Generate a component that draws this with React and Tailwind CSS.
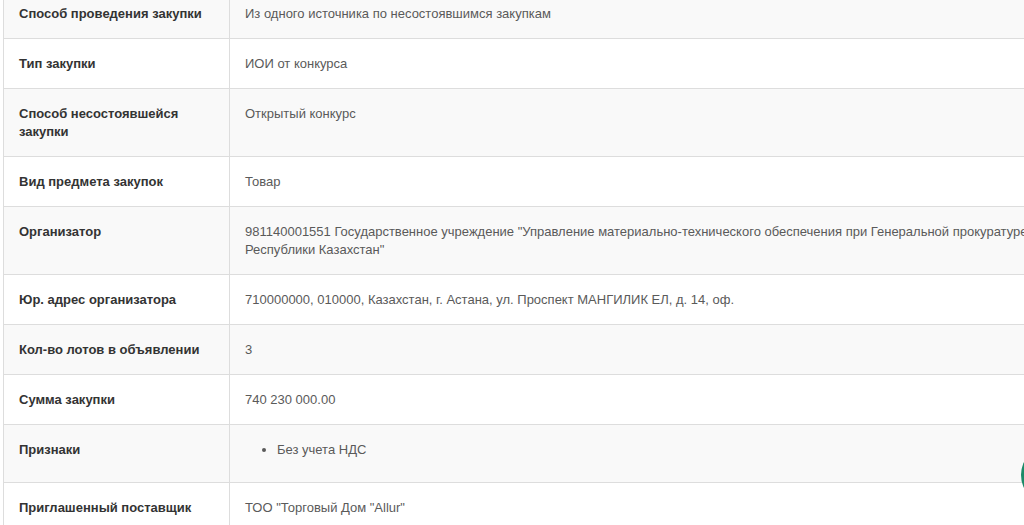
import React from "react";

const rows = [
  ["Способ проведения закупки", "Из одного источника по несостоявшимся закупкам"],
  ["Тип закупки", "ИОИ от конкурса"],
  ["Способ несостоявшейся закупки", "Открытый конкурс"],
  ["Вид предмета закупок", "Товар"],
  ["Организатор", "981140001551 Государственное учреждение \"Управление материально-технического обеспечения при Генеральной прокуратуре Республики Казахстан\""],
  ["Юр. адрес организатора", "710000000, 010000, Казахстан, г. Астана, ул. Проспект МАНГИЛИК ЕЛ, д. 14, оф."],
  ["Кол-во лотов в объявлении", "3"],
  ["Сумма закупки", "740 230 000.00"],
  ["Признаки", "__list__"],
  ["Приглашенный поставщик", "ТОО \"Торговый Дом \"Allur\""],
];

export default function App() {
  return (
    <div
      className="relative w-[1024px] h-[525px] overflow-hidden bg-white"
      style={{ fontFamily: '"Liberation Sans", Arial, sans-serif' }}
    >
      <div className="ml-[3px] -mt-[12px] w-[1070px]">
        <table className="w-full border-collapse border-l border-[#dddddd] text-[13px] leading-[18px]">
          <tbody>
            {rows.map(([label, value], i) => (
              <tr
                key={i}
                className={(i % 2 === 0 ? "bg-[#f9f9f9]" : "bg-white") + " border-t border-[#dddddd]"}
              >
                <td className="w-[226px] align-top pl-[15px] pr-4 pt-[16px] pb-[15px] font-bold text-[#333333] border-r border-[#dddddd]">
                  {label}
                </td>
                <td className="align-top pl-[15px] pr-4 pt-[16px] pb-[15px] text-[#5a5a5a]">
                  {value === "__list__" ? (
                    <ul className="list-disc pl-8 mb-2">
                      <li>Без учета НДС</li>
                    </ul>
                  ) : (
                    value
                  )}
                </td>
              </tr>
            ))}
          </tbody>
        </table>
      </div>
      <div className="absolute left-[1021px] top-[445px] w-[60px] h-[60px] rounded-full bg-[#1b8a68]" />
    </div>
  );
}
